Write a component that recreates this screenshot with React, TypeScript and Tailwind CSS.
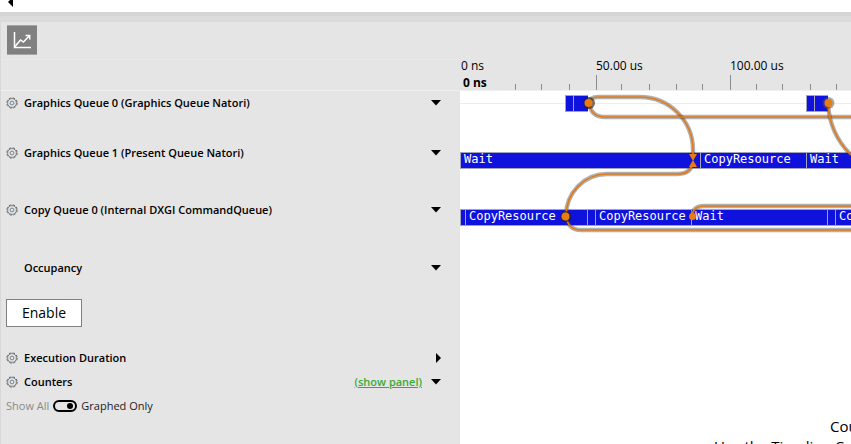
import React, { useState } from "react";

const ticks = [55, 81, 109, 136, 161, 189, 216, 242, 270, 296, 322, 350, 376];
const majorTicks = [136, 270];

function Gear() {
  return (
    <svg viewBox="0 0 12 12" className="size-3 shrink-0" fill="none" stroke="#6b6b6b">
      <circle cx="6" cy="6" r="5.2" strokeWidth="1" strokeDasharray="2.5 1.584" />
      <circle cx="6" cy="6" r="4.4" strokeWidth="0.8" />
      <circle cx="6" cy="6" r="1.9" stroke="#6f8798" strokeWidth="1" />
    </svg>
  );
}

function Caret({ open }: { open: boolean }) {
  return (
    <svg viewBox="0 0 12 12" className="size-3" fill="#000">
      <path d={open ? "M1 3h10L6 8.5z" : "M6 1v10l5-5z"} />
    </svg>
  );
}

type HeaderProps = {
  title: string;
  gear?: boolean;
  startOpen?: boolean;
  children?: React.ReactNode;
};

function RowHeader({ title, gear = true, startOpen = true, children }: HeaderProps) {
  const [open, setOpen] = useState(startOpen);
  return (
    <div className="flex h-6 items-center pl-[5px] pr-[18px]">
      {gear ? (
        <button type="button" aria-label={`${title} settings`} className="w-[18px]">
          <Gear />
        </button>
      ) : (
        <span className="w-[18px]" />
      )}
      <h2 className="flex-1 text-[11px] font-semibold">{title}</h2>
      {children}
      <button
        type="button"
        aria-label={`Toggle ${title}`}
        aria-expanded={open}
        onClick={() => setOpen(!open)}
        className="ml-2"
      >
        <Caret open={open} />
      </button>
    </div>
  );
}

function Bar({ width, label }: { width: number; label?: string }) {
  return (
    <div
      className="h-[17px] shrink-0 overflow-hidden border-y border-l border-[#a3a3bd] bg-[#0f12dc] pl-[3px] font-['DejaVu_Sans_Mono',monospace] text-[12px] leading-[13px] whitespace-nowrap text-white"
      style={{ width }}
    >
      {label}
    </div>
  );
}

const links = [
  "M129 12Q130 6 138 6H180A53 53 0 0 1 233 59V68",
  "M129 12Q131 26 145 26H600",
  "M368 12C369 35 378 51 391 64",
  "M106 125A41 42 0 0 1 147 83H218Q231 83 233 71",
  "M106 125Q108 139 121 139H600",
  "M232 125Q233 115 244 115H600",
];

function Connections() {
  return (
    <svg
      className="pointer-events-none absolute top-0 left-0 h-[160px] w-full overflow-hidden"
      fill="none"
      aria-hidden="true"
    >
      {links.map((d) => (
        <g key={d}>
          <path d={d} stroke="#444" strokeOpacity="0.42" strokeWidth="4.4" />
          <path d={d} stroke="#e27a18" strokeWidth="1.7" />
        </g>
      ))}
      <circle cx="129" cy="12" r="6" fill="#222" fillOpacity="0.65" />
      <circle cx="368.5" cy="12" r="6" fill="#555" fillOpacity="0.5" />
      <circle cx="106" cy="125.5" r="5.5" fill="#222" fillOpacity="0.65" />
      <g fill="#e87b12">
        <circle cx="128.5" cy="12" r="4" />
        <circle cx="368.5" cy="12" r="4" />
        <circle cx="105.5" cy="125.5" r="4" />
        <circle cx="232.5" cy="125.5" r="3.5" />
        <path d="M229 63h8l-4 7z" />
        <path d="M229 76h8l-4-7z" />
      </g>
    </svg>
  );
}

export default function App() {
  const [graphed, setGraphed] = useState(true);
  return (
    <div className="flex h-screen flex-col overflow-hidden bg-white font-['Open_Sans','Noto_Sans',sans-serif] text-black">
      <div className="h-3 shrink-0 overflow-hidden pl-2">
        <svg viewBox="0 0 6 12" className="h-3 w-1.5">
          <path d="M5 -3v10L0 2z" />
        </svg>
      </div>
      <div className="h-1 shrink-0 bg-[#d5d5d5]" />
      <div className="h-1.5 shrink-0 bg-[#dbdbdb]" />

      <div className="flex min-h-0 flex-1">
        <aside className="flex w-[460px] shrink-0 flex-col border-l border-[#d8d8d8] bg-[#e5e5e5]">
          <div className="h-[38px] shrink-0 border-b border-[#e9e9e9] px-1.5 pt-[3px]">
            <button
              type="button"
              aria-label="Show graph"
              className="flex size-[30px] items-center justify-center border-y border-[#a5a5a5] bg-[#808080]"
            >
              <svg viewBox="0 0 18 18" className="size-[18px]" fill="none" stroke="#fff" strokeWidth="1.5">
                <path d="M1.5 1v15.5H18" />
                <path d="M2 15.5L7.5 9l3 2L16.5 4.5M12.5 4.5h4.2v4" />
              </svg>
            </button>
          </div>
          <div className="h-[31px] shrink-0 border-b border-[#f0f0f0]" />
          <div className="h-[50px] shrink-0">
            <RowHeader title="Graphics Queue 0 (Graphics Queue Natori)" />
          </div>
          <div className="h-[57px] shrink-0">
            <RowHeader title="Graphics Queue 1 (Present Queue Natori)" />
          </div>
          <div className="h-[58px] shrink-0">
            <RowHeader title="Copy Queue 0 (Internal DXGI CommandQueue)" />
          </div>
          <div className="h-[90px] shrink-0">
            <RowHeader title="Occupancy" gear={false} />
            <button
              type="button"
              className="mt-[19px] ml-[5px] h-7 w-[76px] border border-[#808080] bg-white text-[14px] leading-5"
            >
              Enable
            </button>
          </div>
          <RowHeader title="Execution Duration" startOpen={false} />
          <RowHeader title="Counters">
            <a href="#counters" className="text-[11px] font-semibold text-[#3aaa35] underline">
              (show panel)
            </a>
          </RowHeader>
          <label className="flex h-6 items-center gap-1 pl-[5px] text-[11px]">
            <span className="text-[#8a8a8a]">Show All</span>
            <input
              type="checkbox"
              role="switch"
              aria-label="Graphed Only"
              checked={graphed}
              onChange={() => setGraphed(!graphed)}
              className="flex h-3 w-6 appearance-none items-center rounded-full border-2 border-black px-0.5 before:size-1.5 before:rounded-full before:bg-black checked:justify-end"
            />
            <span className="text-[#222]">Graphed Only</span>
          </label>
        </aside>

        <main className="flex min-w-0 flex-1 flex-col overflow-hidden">
          <div className="relative h-[69px] shrink-0 overflow-hidden bg-[#e5e5e5] pt-[35px] text-[12px] leading-[17px] whitespace-nowrap">
            <div className="flex pl-px">
              <span className="w-[135px] shrink-0">0 ns</span>
              <span className="w-[134px] shrink-0">50.00 us</span>
              <span className="shrink-0">100.00 us</span>
            </div>
            <div className="pl-[3px] font-bold">0 ns</div>
            <svg className="absolute bottom-0 left-0 h-4 w-full" stroke="#8c8c8c" aria-hidden="true">
              {ticks.map((x) => (
                <path key={x} d={majorTicks.includes(x) ? `M${x}.5 0V15` : `M${x}.5 9V15`} />
              ))}
              <path d="M0 15.5H2000" stroke="#f0f0f0" />
            </svg>
          </div>

          <div className="relative">
            <div className="h-[50px] pt-1">
              <div className="flex h-[17px] items-center">
                <div className="h-px w-[105px] shrink-0 bg-[#ececec]" />
                <Bar width={8} />
                <Bar width={15} />
                <div className="h-px w-[218px] shrink-0 bg-[#ececec]" />
                <Bar width={8} />
                <Bar width={14} />
                <div className="h-px flex-1 bg-[#ececec]" />
              </div>
            </div>
            <div className="flex h-[57px] overflow-hidden pt-[11px]">
              <Bar width={240} label="Wait" />
              <Bar width={106} label="CopyResource" />
              <Bar width={600} label="Wait" />
            </div>
            <div className="flex h-[58px] overflow-hidden pt-[11px]">
              <Bar width={5} />
              <Bar width={122} label="CopyResource" />
              <Bar width={8} />
              <Bar width={96} label="CopyResource" />
              <Bar width={136} label="Wait" />
              <Bar width={8} />
              <Bar width={240} label="CopyResource" />
            </div>
            <Connections />
          </div>

          <div className="flex-1 overflow-hidden pt-[160px] pl-[254px] text-[15px] leading-5 whitespace-nowrap">
            <p className="pl-[116px]">Counters</p>
            <p>Use the Timeline Counters</p>
          </div>
        </main>
      </div>
    </div>
  );
}
